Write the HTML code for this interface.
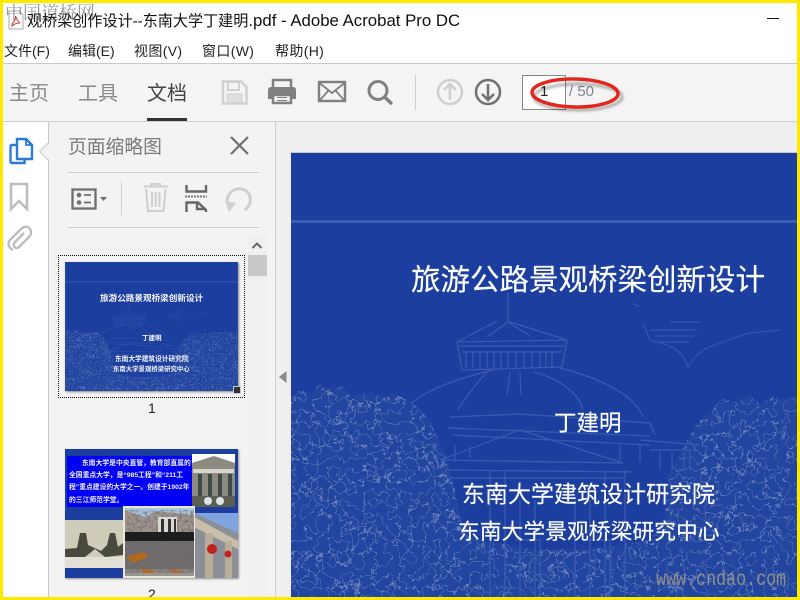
<!DOCTYPE html>
<html lang="zh"><head><meta charset="utf-8"><title>Acrobat</title>
<style>
html,body{margin:0;padding:0;width:800px;height:600px;overflow:hidden;background:#fff;font-family:"Liberation Sans","Noto Sans CJK SC",sans-serif}
.a{position:absolute;white-space:nowrap}
svg{position:absolute;overflow:visible}
.m{font-size:14px;line-height:18px;color:#222;top:42px;letter-spacing:.35px}
.b{-webkit-text-stroke:.15px #fff;color:#fff}
.t{font-weight:bold;color:#f2f2f8}
.l{font-size:6.800px;line-height:12.700px;font-weight:bold;color:#eef}
</style></head><body>
<div class="a" style="left:0;top:0;width:800px;height:600px;overflow:hidden">
<!-- toolbar & panes -->
<div class="a" style="left:0;top:63px;width:800px;height:58px;background:#f4f4f4"></div>
<div class="a" style="left:0;top:63px;width:800px;height:1px;background:#c9c9c9"></div>
<div class="a" style="left:0;top:121px;width:800px;height:1px;background:#cfcfcf"></div>
<div class="a" style="left:49px;top:122px;width:226px;height:478px;background:#f3f3f3"></div>
<div class="a" style="left:48px;top:122px;width:1px;height:478px;background:#c9c9c9"></div>
<div class="a" style="left:275px;top:122px;width:1px;height:478px;background:#cfcfcf"></div>
<div class="a" style="left:276px;top:122px;width:524px;height:478px;background:#efefef"></div>

<!-- title bar -->
<svg style="left:8px;top:10px" width="16" height="20" viewBox="0 0 16 20"><path d="M1 1H11L15 5V19H1Z" fill="#fff" stroke="#aaa"/><path d="M4 14C7 11 8 8 7.500 6C9 10 10 12 12 13C9 13 6 14 4 16Z" fill="none" stroke="#c9352b"/></svg>
<div class="a" style="left:27px;top:12px;font-size:15.100px;line-height:18px;color:#111">观桥梁创作设计--东南大学丁建明<span style="font-size:16.800px">.pdf - Adobe Acrobat Pro DC</span></div>
<div class="a" style="left:767px;top:18px;width:12px;height:1px;background:#111"></div>
<div class="a m" style="left:4px;letter-spacing:0">文件(F)</div>
<div class="a m" style="left:68px;letter-spacing:0">编辑(E)</div>
<div class="a m" style="left:134px">视图(V)</div>
<div class="a m" style="left:202px">窗口(W)</div>
<div class="a m" style="left:275px">帮助(H)</div>

<!-- tabs -->
<div class="a" style="left:9px;top:80px;font-size:20px;line-height:28px;color:#8a8a8a">主页</div>
<div class="a" style="left:78px;top:80px;font-size:20px;line-height:28px;color:#8a8a8a">工具</div>
<div class="a" style="left:147px;top:80px;font-size:20px;line-height:28px;color:#444">文档</div>
<div class="a" style="left:147px;top:118px;width:40px;height:3px;background:#333"></div>

<!-- toolbar icons -->
<svg style="left:0;top:0" width="800" height="125" viewBox="0 0 800 125" fill="none">
<path d="M223 81.500H241L246.500 87V103.500H223Z" stroke="#d0d0d0" stroke-width="2.500"/><rect x="228" y="82" width="11" height="8" stroke="#d0d0d0" stroke-width="2"/><rect x="227" y="94" width="15" height="9" fill="#dedede" stroke="#d0d0d0"/>
<path d="M273 89V80H291V89" stroke="#808080" stroke-width="2.500"/><path d="M268 90.500Q268 87 271 87H293Q296 87 296 90.500V99H292V94H272V99H268Z" fill="#808080"/><path d="M273 95H291V103H273Z" fill="#f4f4f4" stroke="#808080" stroke-width="2.500"/><path d="M277 97.500H287M277 100.500H287" stroke="#808080"/>
<rect x="319" y="82" width="26" height="19" stroke="#808080" stroke-width="2.400"/><path d="M319.500 83L332 93L344.500 83M320 100L328.500 90.500M344 100L335.500 90.500" stroke="#808080" stroke-width="1.800"/>
<circle cx="378" cy="90.500" r="9" stroke="#808080" stroke-width="3"/><path d="M384.500 97L392 104" stroke="#808080" stroke-width="3.400"/>
<path d="M415.500 75V110" stroke="#cfcfcf"/>
<circle cx="450" cy="92" r="12" stroke="#cfcfcf" stroke-width="2.500"/><path d="M450 100V84.500M444 90L450 84L456 90" stroke="#cfcfcf" stroke-width="2.500"/>
<circle cx="488" cy="92" r="12" stroke="#707070" stroke-width="2.500"/><path d="M488 84V99.500M482 94L488 100L494 94" stroke="#707070" stroke-width="2.500"/>
</svg>
<div class="a" style="left:522px;top:75px;width:42px;height:33px;border:1px solid #888;background:#fff"></div>
<div class="a" style="left:540px;top:83px;font-size:15px;line-height:18px;color:#222">1</div>
<div class="a" style="left:569px;top:83px;font-size:15px;line-height:18px;color:#7c8490">/ 50</div>
<svg style="left:520px;top:70px" width="110" height="50" viewBox="520 70 110 50" fill="none">
<defs><filter id="bl" x="-20%" y="-50%" width="140%" height="200%"><feGaussianBlur stdDeviation="1.200"/></filter></defs>
<ellipse cx="578" cy="97" rx="44" ry="13" stroke="#000" stroke-opacity=".3" stroke-width="3" filter="url(#bl)"/>
<ellipse cx="575" cy="93" rx="43" ry="14" stroke="#e3261a" stroke-width="3.400" transform="rotate(1 575 93)"/>
</svg>

<!-- left rail icons -->
<svg style="left:0;top:125px" width="50" height="130" viewBox="0 125 50 130" fill="none">
<path d="M17 145H12Q10.500 145 10.500 147V161Q10.500 163 12 163H24.500V159" stroke="#2a7ad6" stroke-width="2.400"/>
<path d="M17 139H26L32 145V159H17Z" fill="#fff" stroke="#2a7ad6" stroke-width="2.400"/><path d="M26 139V145H32" stroke="#2a7ad6" stroke-width="1.800"/>
<path d="M11 184H27V209L19 201L11 209Z" stroke="#bcbcbc" stroke-width="2.500"/>
<path d="M13 250C9 248 7 244 10 240L21 229C24 226 28 226 30 229C32 232 31 235 29 237L19 247C17 249 15 248 14 246C13 244 14 243 15 242L24 233" stroke="#bcbcbc" stroke-width="2.300"/>
<path d="M48 143L39.500 151.500L48 160" fill="#f3f3f3" stroke="#c9c9c9"/><path d="M48.500 144V159" stroke="#f3f3f3" stroke-width="1.500"/>
</svg>

<!-- panel -->
<div class="a" style="left:68px;top:134px;font-size:18.800px;line-height:26px;color:#7a7a7a">页面缩略图</div>
<svg style="left:50px;top:125px" width="225" height="125" viewBox="50 125 225 125" fill="none">
<path d="M231 137L248 154M248 137L231 154" stroke="#6f6f6f" stroke-width="2.200"/>
<path d="M68 172.500H259M68 227.500H259" stroke="#cdcdcd"/>
<path d="M121.500 181V215" stroke="#d0d0d0"/>
<rect x="72.500" y="189.500" width="23" height="19" stroke="#6e6e6e" stroke-width="2.300"/>
<circle cx="79" cy="195" r="2.300" fill="#6e6e6e"/><circle cx="79" cy="202.500" r="2.300" fill="#6e6e6e"/><path d="M84 195H91M84 202.500H91" stroke="#6e6e6e" stroke-width="1.800"/>
<path d="M100 197H107L103.500 201Z" fill="#6e6e6e"/>
<path d="M143.500 186.500H168M151 186V184H160V186M146 189L148 211H163.500L165.500 189M152 192V207M155.700 192V207M159.500 192V207" stroke="#cfcfcf" stroke-width="2"/>
<path d="M186.500 185V191.500H206V185" stroke="#666" stroke-width="2.400"/>
<path d="M185 196.500H207" stroke="#777" stroke-width="2" stroke-dasharray="2 1"/>
<path d="M186.500 212V202.500H198L206 210V212M197 203V209H206" stroke="#666" stroke-width="2.400"/>
<path d="M231 209C226 205 226 197 231 192C237 187 245 188 249 194C252 200 250 206 245 210" stroke="#cfcfcf" stroke-width="3"/>
<path d="M225 201L236 203L229 212Z" fill="#cfcfcf"/>
</svg>

<!-- scrollbar -->
<div class="a" style="left:248px;top:234px;width:20px;height:366px;background:#f0f0f0"></div>
<div class="a" style="left:248px;top:255px;width:19px;height:21px;background:#c8c8c8"></div>
<svg style="left:250px;top:240px" width="14" height="10" viewBox="0 0 14 10" fill="none"><path d="M2.500 8L7 3.500L11.500 8" stroke="#666" stroke-width="2"/></svg>
<svg style="left:278px;top:370px" width="10" height="14" viewBox="0 0 10 14"><path d="M8.500 1V13L1 7Z" fill="#8a8a8a"/></svg>

<svg width="0" height="0" style="left:0;top:0">
<defs>
<filter id="tx" x="0" y="0" width="100%" height="100%" filterUnits="objectBoundingBox">
<feTurbulence type="fractalNoise" baseFrequency="0.085" numOctaves="3" seed="5"/>
<feColorMatrix type="matrix" values="0 0 0 0 .28  0 0 0 0 .40  0 0 0 0 .70  1 0 0 0 0"/>
<feComponentTransfer><feFuncA type="table" tableValues="0 0 0 0 0 0 0 0 0 0 0 0 0 0 0 0 0 0 0 0 .62 0 0 0 0 0 0 0 0 0 0 0 0 0 0 0 0 0 0 0 0"/></feComponentTransfer>
<feComposite in2="SourceGraphic" operator="in"/>
<feMerge><feMergeNode in="SourceGraphic"/><feMergeNode/></feMerge>
</filter>
<filter id="nz" x="0" y="0" width="100%" height="100%">
<feTurbulence type="fractalNoise" baseFrequency="0.35" numOctaves="2" seed="3"/>
<feColorMatrix type="matrix" values="0 0 0 0 .18  0 0 0 0 .16  0 0 0 0 .16  2.400 0 0 0 -.95"/>
<feComposite in2="SourceGraphic" operator="in"/>
</filter>
<symbol id="art" viewBox="291 153 595 444">
<rect x="291" y="153" width="595" height="444" fill="#1c3f9f"/>
<rect x="291" y="220" width="595" height="3" fill="#3b5bb6"/>
<path filter="url(#tx)" fill="#24459f" d="M291 398L300 390L310 394L320 384L332 390L342 386L352 396L372 392L385 398L395 394L412 402L430 420L445 455L455 490L462 525L480 540L540 550L600 548L650 540L665 515L668 475L685 445L695 425L710 412L722 398L735 402L750 395L760 405L772 396L785 400L800 394L886 395V597H291Z"/>
<g fill="none" stroke="#3c5ab0" stroke-width="1.200">
<path d="M508 293V322M508 322L487 337M508 322L530 336M497 321L457 342L567 340L510 322"/>
<path d="M457 342L462 370L562 367L567 340M460 346H564M462 352H562M466 352V368M473 352V368M480 352V368M487 352V368M494 352V368M501 352V368M508 352V368M516 352V368M524 352V368M532 352V368M540 352V368M546 352V368M552 352V368"/>
<path d="M493 370C460 378 430 388 413 402M560 368C600 378 635 395 643 417M487 372C475 385 465 398 458 410M533 372C560 378 580 395 583 410M510 372L507 395M520 372L521 395"/>
<path d="M450 417L520 414L650 423L655 435M448 428L650 436M452 435L650 445M455 445V462M470 445V458M640 445V462M620 445V460"/>
<path d="M440 460L520 430L623 463L440 460M448 470L632 472M450 478H625"/>
<path d="M490 470V597M505 470V597M520 500V597M535 500V597M575 500V597M590 500V597M605 470V597M625 470V597M515 540H540V597M585 540H610V597M640 440L700 445M650 450H690V470M660 452V470M672 452V470M684 452V470"/>
<path d="M643 323L650 340C665 345 680 345 688 367C695 355 705 347 715 345C730 340 745 332 760 332L780 330M640 306L635 305L633 303M650 330H697M655 336H695M660 342H690M670 322H700" stroke-width="1"/>
</g>
</symbol>
</defs>
</svg>

<!-- main page -->
<div class="a" style="left:291px;top:153px;width:506px;height:444px;overflow:hidden;box-shadow:0 -1px 0 #c8c8c8">
<svg style="left:0;top:0" width="595" height="444"><use href="#art" width="595" height="444"/></svg>
<div class="a b" style="left:120px;top:108px;font-size:29.500px;line-height:40px">旅游公路景观桥梁创新设计</div>
<div class="a b" style="left:263px;top:255px;font-size:22.500px;line-height:32px">丁建明</div>
<div class="a b" style="left:171px;top:325px;font-size:23px;line-height:32px">东南大学建筑设计研究院</div>
<div class="a b" style="left:167px;top:363px;font-size:21.800px;line-height:32px">东南大学景观桥梁研究中心</div>
<div class="a" style="left:365px;top:417px;font-family:'Liberation Mono',monospace;font-size:16.700px;line-height:22px;color:#8f8e88;transform:scaleY(1.3);transform-origin:0 50%">www.cndao.com</div>
</div>

<!-- thumbnail 1 -->
<div class="a" style="left:58px;top:255px;width:185px;height:141px;border:1px dotted #111"></div>
<div class="a" style="left:65px;top:262px;width:173px;height:129px;overflow:hidden;box-shadow:1px 1px 2px rgba(0,0,0,.45)">
<svg style="left:0;top:0" width="173" height="129"><use href="#art" width="173" height="129"/></svg>
<div class="a t" style="left:35px;top:30px;font-size:8.600px;line-height:12px">旅游公路景观桥梁创新设计</div>
<div class="a t" style="left:77px;top:72px;font-size:6.500px;line-height:10px">丁建明</div>
<div class="a t" style="left:50px;top:93px;font-size:6.700px;line-height:10px">东南大学建筑设计研究院</div>
<div class="a t" style="left:48px;top:103px;font-size:6.400px;line-height:10px">东南大学景观桥梁研究中心</div>
</div>
<div class="a" style="left:233px;top:386px;width:6px;height:6px;background:#333;border:1px solid #c5c9d6"></div>
<div class="a" style="left:148px;top:400px;font-size:14px;line-height:17px;color:#222">1</div>

<!-- thumbnail 2 -->
<div class="a" style="left:65px;top:449px;width:173px;height:129px;background:#1c3f9f;overflow:hidden;box-shadow:1px 1px 2px rgba(0,0,0,.4)">
<div class="a" style="left:2px;top:7px;width:126px;height:51px;background:#0000f5"></div>
<div class="a l" style="left:17px;top:8.500px">东南大学是中央直管，教育部直属的</div>
<div class="a l" style="left:4px;top:20.500px">全国重点大学，是“985工程”和“211工</div>
<div class="a l" style="left:4px;top:33px">程”重点建设的大学之一。创建于1902年</div>
<div class="a l" style="left:4px;top:46px">的三江师范学堂。</div>
<svg style="left:0;top:0" width="173" height="129" viewBox="0 0 173 129">
<rect x="127" y="5" width="43" height="53" fill="#fff"/>
<path d="M127 14L149 7L170 14V58H127Z" fill="#8d8a80"/><path d="M128 20H169V24H128Z" fill="#d8d6cc"/>
<path d="M133 25h4v22h-4zM143 25h4v22h-4zM153 25h4v22h-4zM163 25h4v22h-4z" fill="#3e4a48"/>
<path d="M127 47H170V58H127Z" fill="#5a5f52"/><circle cx="143" cy="52" r="4" fill="#dfe3ea"/><circle cx="155" cy="52" r="4" fill="#dfe3ea"/>
<rect x="0" y="71" width="58" height="48" fill="#cfccb9"/>
<path d="M0 100L12 99L15 84H21L23 96L36 102L42 96L45 84H50L53 98L58 94V106L40 108L30 100L20 108H0Z" fill="#4a4940"/><path d="M0 108H58V119H0Z" fill="#e2e0d4"/>
<rect x="129" y="64" width="44" height="65" fill="#8d8f98"/>
<path d="M129 64L173 84V64Z" fill="#7ea5e0"/><path d="M129 68L173 92V100L129 78Z" fill="#c7bfa9"/>
<path d="M140 84h8v45h-8zM160 92h7v37h-7z" fill="#b8ae98"/>
<circle cx="147" cy="100" r="5" fill="#c4201e"/><circle cx="163" cy="105" r="3.500" fill="#c4201e"/>
<rect x="58" y="57" width="72" height="72" fill="#e9e7e0"/>
<rect x="60" y="59" width="69" height="68" fill="#8a8684"/>
<path d="M60 59H129V68H60Z" fill="#a9c6e2"/>
<path d="M60 61L80 68L92 62L129 66V84H60Z" fill="#a0958f"/>
<rect x="60" y="61" width="69" height="23" fill="#000" filter="url(#nz)"/>
<path d="M93 68H112V84H93Z" fill="#d9d8d2"/><path d="M96 70h3v14h-3zM103 70h3v14h-3zM109 70h2v14h-2z" fill="#333"/>
<path d="M60 83H129V92H60Z" fill="#1e1d1e"/>
<path d="M60 92H129V120H60Z" fill="#6d6a6c"/>
<rect x="60" y="92" width="69" height="32" fill="#000" filter="url(#nz)"/>
<path d="M61 108L78 103L84 108L68 114ZM75 119L90 122L82 127ZM105 120L118 123L110 127Z" fill="#b3671f"/>
<rect x="60" y="124" width="69" height="3" fill="#9a958e"/>
<rect x="0" y="119" width="58" height="10" fill="#1c3f9f"/>
</svg>
</div>
<div class="a" style="left:148px;top:586px;font-size:14px;line-height:17px;color:#222">2</div>

<!-- yellow frame -->
<div class="a" style="left:0;top:0;width:800px;height:3px;background:#ffe900"></div>
<div class="a" style="left:0;top:597px;width:800px;height:3px;background:#ffe900"></div>
<div class="a" style="left:0;top:0;width:3px;height:600px;background:#ffe900"></div>
<div class="a" style="left:797px;top:0;width:3px;height:600px;background:#ffe900"></div>
<div class="a" style="left:5px;top:3px;font-family:'Liberation Serif','Noto Serif CJK SC',serif;font-size:18px;line-height:20px;color:rgba(70,70,70,.55)">中国道桥网</div>
</div>
</body></html>
